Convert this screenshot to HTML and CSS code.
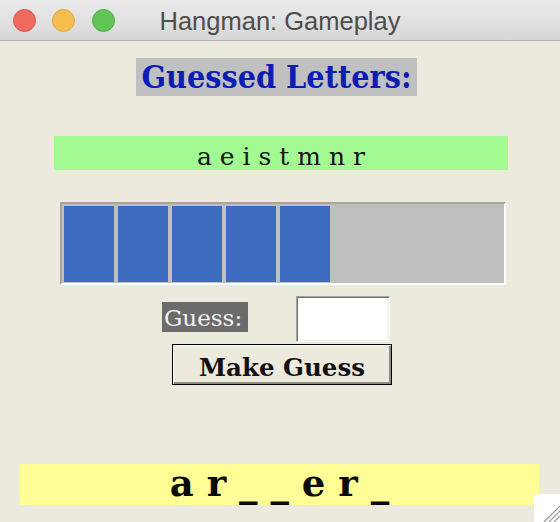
FILE: index.html
```html
<!DOCTYPE html>
<html>
<head>
<meta charset="utf-8">
<title>Hangman: Gameplay</title>
<link rel="stylesheet" href="styles.css">
</head>
<body>
<div class="window">
  <div class="titlebar">
    <div class="lights">
      <span class="light red"></span>
      <span class="light yellow"></span>
      <span class="light green"></span>
    </div>
    <div class="title">Hangman: Gameplay</div>
    <div></div>
  </div>
  <div class="content">
    <div class="guessed-label">Guessed Letters:</div>
    <div class="letters">a e i s t m n r</div>
    <div class="progress">
      <span class="block"></span>
      <span class="block"></span>
      <span class="block"></span>
      <span class="block"></span>
      <span class="block"></span>
    </div>
    <div class="guess-row">
      <label class="guess-label" for="guess">Guess:</label>
      <input class="guess-input" id="guess" type="text">
    </div>
    <button class="make-guess">Make Guess</button>
    <div class="word">a r _ _ e r _</div>
  </div>
  <svg class="grip" width="26" height="28" viewBox="0 0 26 28">
    <rect width="26" height="28" fill="#ffffff"/>
    <line x1="10" y1="28" x2="26" y2="12" stroke="#9a9a9a" stroke-width="1.2"/>
    <line x1="15" y1="28" x2="26" y2="17" stroke="#9a9a9a" stroke-width="1.2"/>
    <line x1="20" y1="28" x2="26" y2="22" stroke="#9a9a9a" stroke-width="1.2"/>
  </svg>
</div>
</body>
</html>
```
FILE: styles.css
```css
html, body {
  margin: 0;
  padding: 0;
}
body {
  background: #ece9dd;
  width: 560px;
  height: 522px;
  overflow: hidden;
}
.window {
  position: relative;
  width: 560px;
  height: 522px;
}
.titlebar {
  height: 40px;
  border-bottom: 1px solid #b3b3b3;
  background: linear-gradient(#ebebeb, #d6d6d6);
  display: grid;
  grid-template-columns: 1fr auto 1fr;
  align-items: center;
}
.lights {
  display: flex;
  gap: 16.5px;
  padding-left: 12.5px;
}
.light {
  width: 21px;
  height: 21px;
  border-radius: 50%;
  border: 1px solid transparent;
}
.red { background: #ee6a5f; border-color: #d8554b; }
.yellow { background: #f6be4f; border-color: #dea53d; }
.green { background: #61c555; border-color: #4ead44; }
.title {
  font-family: "Liberation Sans", Arial, sans-serif;
  font-size: 25.5px;
  color: #4d4d4d;
  padding-top: 2px;
  white-space: nowrap;
}
.content {
  display: flex;
  flex-direction: column;
  align-items: flex-start;
  font-family: "DejaVu Serif", serif;
}
.guessed-label {
  margin: 17px 0 0 136px;
  width: 281px;
  height: 37px;
  padding-top: 1px;
  line-height: 37px;
  background: #c0c0c0;
  color: #0c1db4;
  font-family: "DejaVu Serif Condensed", "DejaVu Serif", serif;
  font-stretch: condensed;
  font-weight: bold;
  font-size: 32px;
  text-align: center;
  white-space: nowrap;
}
.letters {
  margin: 40px 0 0 54px;
  width: 454px;
  height: 26px;
  padding-top: 8px;
  line-height: 26px;
  background: #a3fa93;
  color: #151515;
  font-size: 25px;
  text-align: center;
  white-space: nowrap;
}
.progress {
  margin: 32px 0 0 60px;
  box-sizing: border-box;
  width: 446px;
  height: 83px;
  border-style: solid;
  border-width: 2px;
  border-color: #a8a497 #ffffff #ffffff #a8a497;
  background: #bfbfbf;
  padding: 2px 2px 1px 2px;
  display: flex;
  gap: 4px;
}
.block {
  width: 50px;
  height: 76px;
  background: #3d6bbf;
}
.guess-row {
  margin: 11px 0 0 162px;
  display: flex;
  align-items: flex-start;
  gap: 48px;
}
.guess-label {
  margin-top: 6px;
  width: 84px;
  height: 27px;
  padding: 3px 0 0 2px;
  line-height: 27px;
  background: #6b6b6b;
  color: #f2f2f2;
  font-family: "DejaVu Serif", serif;
  font-size: 23px;
  white-space: nowrap;
}
.guess-input {
  box-sizing: border-box;
  width: 94px;
  height: 46px;
  margin: 0;
  padding: 0 4px;
  border-style: solid;
  border-width: 1px;
  border-color: #a8a497 #ffffff #ffffff #a8a497;
  box-shadow: inset 1px 1px 0 #6f6f6f, inset -1px -1px 0 #f1efe2;
  background: #ffffff;
  outline: none;
  font-family: "DejaVu Serif", serif;
  font-size: 20px;
}
.make-guess {
  margin: 2px 0 0 172px;
  box-sizing: border-box;
  width: 220px;
  height: 41px;
  padding: 8px 0 2px 0;
  border: 1px solid #000000;
  box-shadow: inset 1px 1px 0 #ffffff, inset -2px -2px 0 #8e8b80;
  background: #ece9dd;
  color: #111111;
  font-family: "DejaVu Serif", serif;
  font-weight: bold;
  font-size: 24.5px;
  line-height: 29px;
  text-align: center;
  white-space: nowrap;
}
.word {
  margin: 79px 0 0 20px;
  width: 519px;
  height: 41px;
  line-height: 39px;
  background: #fffe96;
  color: #0a0a0a;
  font-weight: bold;
  font-size: 37px;
  text-align: center;
  white-space: pre;
}
.grip {
  position: absolute;
  right: 0;
  bottom: 0;
  display: block;
}
```
